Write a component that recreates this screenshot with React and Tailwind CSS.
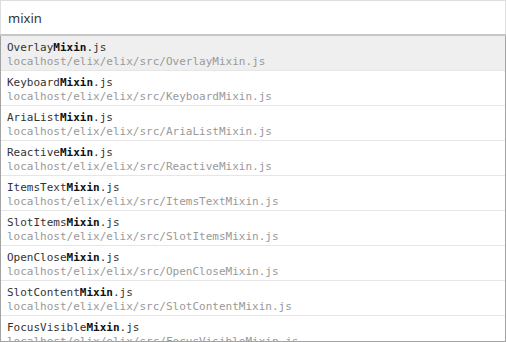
import React from 'react';

const names = [
  'Overlay',
  'Keyboard',
  'AriaList',
  'Reactive',
  'ItemsText',
  'SlotItems',
  'OpenClose',
  'SlotContent',
  'FocusVisible',
];

export default function App() {
  return (
    <div className="w-[506px] h-[342px] bg-white overflow-hidden flex flex-col">
      <div className="h-[34px] shrink-0 border-t border-l border-r border-[#dedede] flex items-center pl-[7px] pt-[2px]">
        <span className="text-[13px] text-[#333]" style={{ fontFamily: '"Noto Sans", sans-serif' }}>mixin</span>
      </div>
      <div className="h-[2px] shrink-0 bg-[#c6c6c6]" />
      <div
        className="flex-1 min-h-0 overflow-hidden border-l border-r border-b border-[#a3a3a3]"
        style={{ fontFamily: '"DejaVu Sans Mono", monospace' }}
      >
        {names.map((n, i) => (
          <div
            key={n}
            className={`h-[35px] pl-[6px] pt-[5px] border-b border-[#e6e6e6] text-[11px] leading-[14px] ${i === 0 ? 'bg-[#efefef]' : 'bg-white'}`}
          >
            <div className="text-[#333] whitespace-nowrap">
              {n}
              <b className="font-bold text-[#111]">Mixin</b>.js
            </div>
            <div className="text-[#999] whitespace-nowrap">localhost/elix/elix/src/{n}Mixin.js</div>
          </div>
        ))}
      </div>
    </div>
  );
}
